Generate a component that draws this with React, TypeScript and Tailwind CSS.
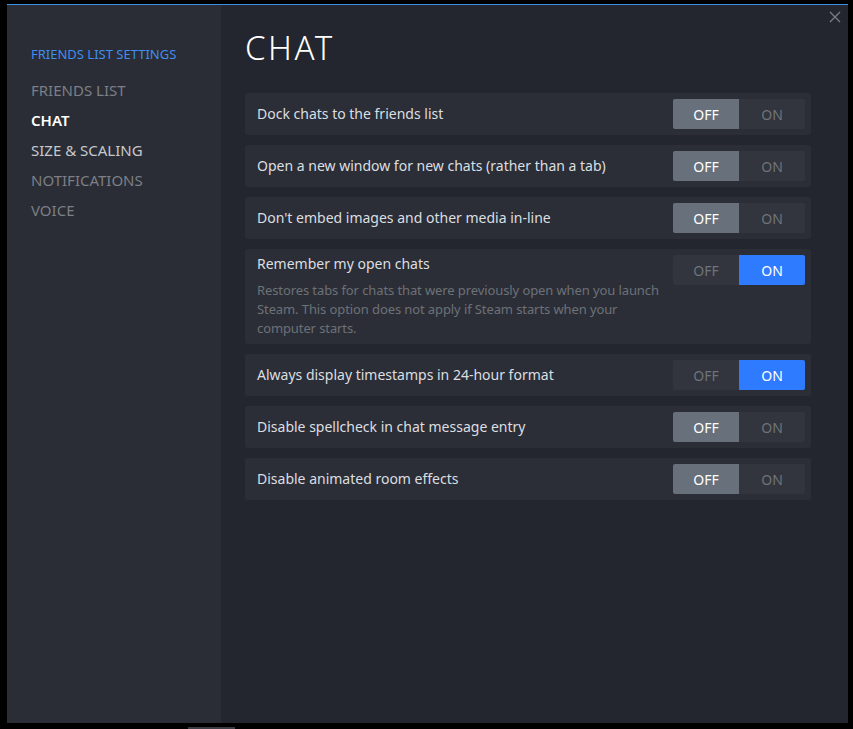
import { useState } from "react";

type Setting = {
  label: string;
  description?: string;
  on: boolean;
};

const initialSettings: Setting[] = [
  { label: "Dock chats to the friends list", on: false },
  { label: "Open a new window for new chats (rather than a tab)", on: false },
  { label: "Don't embed images and other media in-line", on: false },
  {
    label: "Remember my open chats",
    description:
      "Restores tabs for chats that were previously open when you launch Steam. This option does not apply if Steam starts when your computer starts.",
    on: true,
  },
  { label: "Always display timestamps in 24-hour format", on: true },
  { label: "Disable spellcheck in chat message entry", on: false },
  { label: "Disable animated room effects", on: false },
];

const navItems = [
  { label: "FRIENDS LIST", cls: "text-[#7c7f86]" },
  { label: "CHAT", cls: "text-white font-semibold" },
  { label: "SIZE & SCALING", cls: "text-[#c6c8cc]" },
  { label: "NOTIFICATIONS", cls: "text-[#7c7f86]" },
  { label: "VOICE", cls: "text-[#7c7f86]" },
];

function Toggle({ on, onChange }: { on: boolean; onChange: (v: boolean) => void }) {
  return (
    <div className="flex h-[30px] w-[132px] shrink-0 rounded-[2px] bg-[#32353d] text-[14px]">
      <button
        onClick={() => onChange(false)}
        className={`w-[66px] rounded-l-[2px] ${!on ? "bg-[#67707b] text-white" : "text-[#6f737a]"}`}
      >
        OFF
      </button>
      <button
        onClick={() => onChange(true)}
        className={`w-[66px] rounded-r-[2px] ${on ? "bg-[#2f7bff] text-white" : "text-[#6f737a]"}`}
      >
        ON
      </button>
    </div>
  );
}

export default function App() {
  const [settings, setSettings] = useState(initialSettings);

  return (
    <div className="relative h-[729px] w-[853px] bg-black pl-[7px] pt-[4px] font-['Noto_Sans',sans-serif]">
      <div className="flex h-[719px] w-[841px] border-t border-[#3d8fe0] bg-[#23262e]">
        <div className="w-[214px] shrink-0 bg-[#2a2d35] pl-[24px] pt-[40px]">
          <div className="text-[13px] text-[#3f8ef0]">FRIENDS LIST SETTINGS</div>
          <div className="mt-[10px] flex flex-col">
            {navItems.map((n) => (
              <div key={n.label} className={`h-[30px] text-[15px] leading-[30px] ${n.cls}`}>
                {n.label}
              </div>
            ))}
          </div>
        </div>

        <div className="relative flex-1 pl-[24px] pr-[37px]">
          <button className="absolute right-[7px] top-[6px] text-[#7b7e84]">
            <svg width="12" height="12" viewBox="0 0 12 12" fill="none" stroke="currentColor" strokeWidth="1.3">
              <path d="M1 1L11 11M11 1L1 11" />
            </svg>
          </button>
          <h1 className="mt-[23px] text-[33px] font-light leading-[40px] tracking-[2.5px] text-white">CHAT</h1>
          <div className="mt-[25px] flex flex-col gap-[10px]">
            {settings.map((s, i) => (
              <div key={s.label} className="flex rounded-[3px] bg-[#2b2e36] py-[6px] pl-[12px] pr-[6px]">
                <div className="flex-1 pr-[4px]">
                  <div className={`text-[14px] text-[#dcdee1] ${s.description ? "leading-[18px]" : "leading-[30px]"}`}>
                    {s.label}
                  </div>
                  {s.description && (
                    <div className="mt-[8px] text-[13px] leading-[19px] tracking-[-0.1px] text-[#6d7178]">
                      {s.description}
                    </div>
                  )}
                </div>
                <Toggle
                  on={s.on}
                  onChange={(v) =>
                    setSettings((prev) => prev.map((p, j) => (j === i ? { ...p, on: v } : p)))
                  }
                />
              </div>
            ))}
          </div>
        </div>
      </div>
      <div className="absolute left-[188px] top-[727px] h-[2px] w-[47px] bg-[#3a3d44]" />
    </div>
  );
}
